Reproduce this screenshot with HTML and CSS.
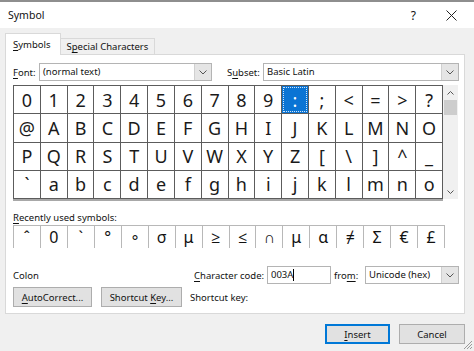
FILE: index.html
```html
<!DOCTYPE html>
<html lang="en">
<head>
    <meta charset="UTF-8">
    <meta name="viewport" content="width=device-width, initial-scale=1.0">
    <title>Symbol</title>
    <link rel="stylesheet" href="styles.css">
</head>
<body>
<div class="titlebar">
    <span class="title">Symbol</span>
    <span class="help">?</span>
    <svg class="close" width="11" height="11" viewBox="0 0 11 11"><path d="M0.5 0.5L10.5 10.5M10.5 0.5L0.5 10.5" stroke="#222" stroke-width="1"/></svg>
</div>
<div class="content">
    <div class="tabs">
        <div class="tab active"><u>S</u>ymbols</div>
        <div class="tab">S<u>p</u>ecial Characters</div>
    </div>
    <div class="panel">
        <div class="font-row">
            <span class="lbl-font"><u>F</u>ont:</span>
            <div class="combo combo-font">
                <span class="combo-text">(normal text)</span>
                <span class="combo-arrow"><svg width="8" height="5" viewBox="0 0 8 5"><path d="M0.5 0.5L4 4L7.5 0.5" fill="none" stroke="#555"/></svg></span>
            </div>
            <span class="lbl-subset">S<u>u</u>bset:</span>
            <div class="combo combo-subset">
                <span class="combo-text">Basic Latin</span>
                <span class="combo-arrow"><svg width="8" height="5" viewBox="0 0 8 5"><path d="M0.5 0.5L4 4L7.5 0.5" fill="none" stroke="#555"/></svg></span>
            </div>
        </div>
        <div class="map-row">
            <div class="charmap">
                <div class="cell">0</div><div class="cell">1</div><div class="cell">2</div><div class="cell">3</div>
                <div class="cell">4</div><div class="cell">5</div><div class="cell">6</div><div class="cell">7</div>
                <div class="cell">8</div><div class="cell">9</div><div class="cell sel">:</div><div class="cell">;</div>
                <div class="cell">&lt;</div><div class="cell">=</div><div class="cell">&gt;</div><div class="cell">?</div>

                <div class="cell">@</div><div class="cell">A</div><div class="cell">B</div><div class="cell">C</div>
                <div class="cell">D</div><div class="cell">E</div><div class="cell">F</div><div class="cell">G</div>
                <div class="cell">H</div><div class="cell">I</div><div class="cell">J</div><div class="cell">K</div>
                <div class="cell">L</div><div class="cell">M</div><div class="cell">N</div><div class="cell">O</div>

                <div class="cell">P</div><div class="cell">Q</div><div class="cell">R</div><div class="cell">S</div>
                <div class="cell">T</div><div class="cell">U</div><div class="cell">V</div><div class="cell">W</div>
                <div class="cell">X</div><div class="cell">Y</div><div class="cell">Z</div><div class="cell">[</div>
                <div class="cell">\</div><div class="cell">]</div><div class="cell">^</div><div class="cell">_</div>

                <div class="cell">`</div><div class="cell">a</div><div class="cell">b</div><div class="cell">c</div>
                <div class="cell">d</div><div class="cell">e</div><div class="cell">f</div><div class="cell">g</div>
                <div class="cell">h</div><div class="cell">i</div><div class="cell">j</div><div class="cell">k</div>
                <div class="cell">l</div><div class="cell">m</div><div class="cell">n</div><div class="cell">o</div>
            </div>
            <div class="scrollbar">
                <span class="sb-btn"><svg width="7" height="4" viewBox="0 0 7 4"><path d="M0.5 3.5L3.5 0.5L6.5 3.5" fill="none" stroke="#555"/></svg></span>
                <span class="sb-thumb"></span>
                <span class="sb-space"></span>
                <span class="sb-btn"><svg width="7" height="4" viewBox="0 0 7 4"><path d="M0.5 0.5L3.5 3.5L6.5 0.5" fill="none" stroke="#555"/></svg></span>
            </div>
        </div>
        <div class="recent-label"><u>R</u>ecently used symbols:</div>
        <div class="recent">
            <div class="rcell">ˆ</div><div class="rcell">0</div><div class="rcell">ˋ</div><div class="rcell">°</div>
            <div class="rcell">∘</div><div class="rcell">σ</div><div class="rcell">μ</div><div class="rcell">≥</div>
            <div class="rcell">≤</div><div class="rcell">∩</div><div class="rcell">μ</div><div class="rcell">α</div>
            <div class="rcell">≠</div><div class="rcell">Σ</div><div class="rcell">€</div><div class="rcell">£</div>
        </div>
        <div class="info-row">
            <span class="char-name">Colon</span>
            <span class="lbl-code"><u>C</u>haracter code:</span>
            <div class="code-input">003A<span class="caret"></span></div>
            <span class="lbl-from">fro<u>m</u>:</span>
            <div class="combo combo-from">
                <span class="combo-text">Unicode (hex)</span>
                <span class="combo-arrow"><svg width="8" height="5" viewBox="0 0 8 5"><path d="M0.5 0.5L4 4L7.5 0.5" fill="none" stroke="#555"/></svg></span>
            </div>
        </div>
        <div class="btn-row">
            <button class="btn btn-auto"><u>A</u>utoCorrect...</button>
            <button class="btn btn-key">Shortcut <u>K</u>ey...</button>
            <span class="lbl-key">Shortcut key:</span>
        </div>
    </div>
    <div class="dialog-buttons">
        <button class="btn btn-insert"><u>I</u>nsert</button>
        <button class="btn btn-cancel">Cancel</button>
    </div>
</div>
<svg class="grip" width="11" height="11" viewBox="0 0 11 11">
    <path d="M10 2L2 10M10 5L5 10M10 8L8 10" stroke="#9a9a9a" stroke-width="1"/>
</svg>
</body>
</html>
```

FILE: styles.css
```css
body {
    margin: 0;
    width: 474px;
    height: 351px;
    overflow: hidden;
    position: relative;
    background: #f0f0f0;
    font-family: "Noto Sans", "Open Sans", sans-serif;
    font-size: 9.5px;
    color: #111;
}
u {
    text-decoration-thickness: 1px;
    text-underline-offset: 2px;
}
.titlebar {
    height: 26px;
    border-top: 2px solid #8e8e8e;
    background: #fff;
    display: flex;
    align-items: center;
    padding: 0 17px 0 8px;
    font-size: 10.5px;
}
.title {
    flex: 1;
}
.help {
    margin-right: 30px;
    font-size: 12px;
}
.content {
    padding: 5px 9px 0 5px;
}
.tabs {
    display: flex;
    align-items: flex-end;
    height: 21px;
}
.tab {
    height: 16px;
    box-sizing: border-box;
    line-height: 15px;
    padding: 0 6px;
    background: #f0f0f0;
    border: 1px solid #d9d9d9;
    border-left: none;
    border-bottom: none;
}
.tab.active {
    height: 22px;
    line-height: 21px;
    margin-bottom: -1px;
    padding: 0 9px 0 7px;
    background: #fff;
    border-left: 1px solid #d9d9d9;
    position: relative;
    z-index: 1;
}
.panel {
    height: 260px;
    box-sizing: border-box;
    background: #fff;
    border: 1px solid #d9d9d9;
    padding: 8px 5px 0 7px;
}
.font-row,
.info-row {
    display: flex;
    align-items: center;
    height: 18px;
}
.lbl-font {
    width: 26px;
}
.lbl-subset {
    width: 36px;
    margin-left: 15px;
}
.combo {
    display: flex;
    height: 18px;
    box-sizing: border-box;
    border: 1px solid #b4b4b4;
    background: #fff;
}
.combo-font {
    width: 173px;
}
.combo-subset {
    width: 196px;
}
.combo-from {
    width: 94px;
}
.combo-text {
    flex: 1;
    padding-left: 3px;
    line-height: 16px;
    white-space: nowrap;
}
.combo-arrow {
    width: 16px;
    display: flex;
    align-items: center;
    justify-content: center;
    background: #e5e5e5;
    border-left: 1px solid #d0d0d0;
}
.map-row {
    display: flex;
    margin-top: 4px;
}
.charmap {
    width: 430px;
    height: 114px;
    box-sizing: border-box;
    display: grid;
    grid-template-columns: repeat(16, 1fr);
    grid-template-rows: repeat(4, 1fr);
    gap: 1px;
    background: #5c5c5c;
    border: 1px solid #5c5c5c;
    box-shadow: 0 2px 0 #a8a8a8;
}
.cell {
    background: #fff;
    display: flex;
    align-items: center;
    justify-content: center;
    font-size: 18px;
    color: #1a1a1a;
}
.cell.sel {
    background: #0a74d4;
    color: #fff;
    outline: 1px dotted #cfe4f8;
    outline-offset: -2px;
}
.scrollbar {
    width: 15px;
    height: 114px;
    display: flex;
    flex-direction: column;
    background: #f0f0f0;
}
.sb-btn {
    height: 15px;
    display: flex;
    align-items: center;
    justify-content: center;
}
.sb-thumb {
    height: 15px;
    margin: 0 1px;
    background: #cdcdcd;
}
.sb-space {
    flex: 1;
}
.recent-label {
    margin-top: 12px;
    line-height: 14px;
}
.recent {
    width: 432px;
    height: 23px;
    box-sizing: border-box;
    display: grid;
    grid-template-columns: repeat(16, 1fr);
    gap: 1px;
    background: #b8b8b8;
    border: 1px solid #b8b8b8;
}
.rcell {
    background: #fff;
    display: flex;
    align-items: center;
    justify-content: center;
    font-size: 16px;
}
.info-row {
    margin-top: 18px;
}
.char-name {
    width: 181px;
}
.lbl-code {
    width: 73px;
    white-space: nowrap;
}
.code-input {
    width: 64px;
    height: 18px;
    box-sizing: border-box;
    border: 1px solid #b4b4b4;
    padding-left: 3px;
    line-height: 16px;
    display: flex;
    align-items: center;
}
.caret {
    width: 1px;
    height: 12px;
    background: #000;
}
.lbl-from {
    width: 31px;
    margin-left: 3px;
}
.btn-row {
    display: flex;
    align-items: center;
    margin-top: 3px;
}
.btn {
    height: 20px;
    box-sizing: border-box;
    padding: 0;
    font-family: inherit;
    font-size: 9.5px;
    color: #111;
    background: #e1e1e1;
    border: 1px solid #adadad;
}
.btn-auto {
    width: 79px;
}
.btn-key {
    width: 81px;
    margin-left: 9px;
}
.lbl-key {
    margin-left: 8px;
}
.dialog-buttons {
    display: flex;
    justify-content: flex-end;
    gap: 9px;
    margin-top: 10px;
}
.btn-insert {
    width: 65px;
    border-color: #0078d7;
    box-shadow: inset 0 0 0 1px #0078d7;
}
.btn-cancel {
    width: 66px;
}
.grip {
    position: absolute;
    right: 1px;
    bottom: 1px;
}
```
